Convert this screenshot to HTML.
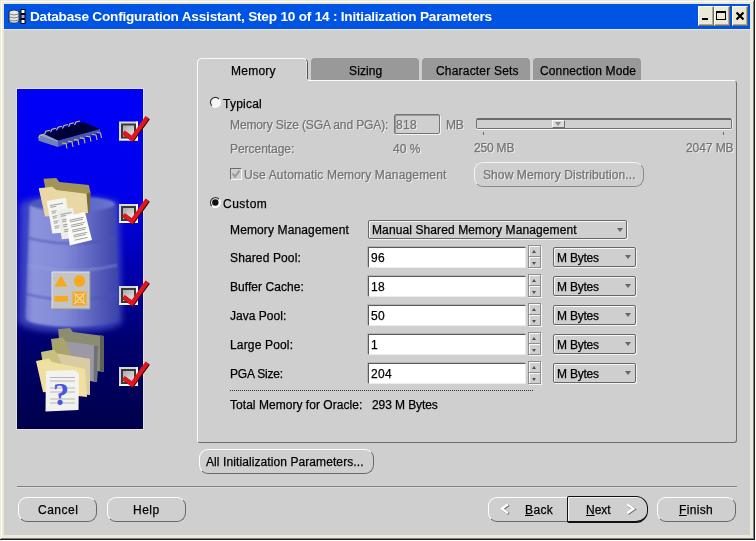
<!DOCTYPE html>
<html><head><meta charset="utf-8"><title>Database Configuration Assistant</title>
<style>
*{box-sizing:border-box;margin:0;padding:0}
html,body{width:756px;height:541px;overflow:hidden;background:#fff}
body{position:relative;font-family:"Liberation Sans",sans-serif;font-size:12px;color:#000}
.abs{position:absolute}
#title{left:4px;top:4px;width:746px;height:25px;background:#0054e3;color:#fff;font-weight:bold;font-size:13.6px;line-height:24px;white-space:nowrap;letter-spacing:-0.21px}
#title span{will-change:transform}
.cb{position:absolute;top:2px;width:16px;height:20px;background:#ece9d8;border:1px solid #fff;border-right-color:#716f64;border-bottom-color:#716f64;box-shadow:inset -1px -1px 0 #aca899}
#content{left:4px;top:30px;width:746px;height:505px;background:#cfcfcf}
.t{position:absolute;white-space:nowrap;line-height:14px;height:14px;will-change:transform;-webkit-text-stroke:0.25px currentColor}
.t u{text-decoration:underline;text-underline-offset:1px}
.dis{color:#747474;text-shadow:1px 1px 0 #f2f2f2}
.btn{position:absolute;height:25px;border:1px solid #6a6a6a;border-top-color:#fff;border-left-color:#fff;border-radius:9px;background:#cfcfcf;}
.tab{position:absolute;top:58px;height:22px;background:#999;border-radius:4px 4px 0 0}
.inp{position:absolute;left:368px;width:158px;height:21px;background:#fff;border:1px solid #5a5a5a;border-right-color:#ececec;border-bottom-color:#ececec;box-shadow:-1px -1px 0 #b4b4b4;border-radius:1px}
.combo{position:absolute;left:553px;width:83px;height:20px;border:1px solid #666;border-radius:2px;background:#cfcfcf;box-shadow:inset 1px 1px 0 #f8f8f8,1px 1px 0 #f4f4f4}
.arr{position:absolute;width:0;height:0;border-left:3.5px solid transparent;border-right:3.5px solid transparent;border-top:4px solid #666}
.spin{position:absolute;left:528px;width:13px;height:23px;border:1px solid #8e8e8e;box-shadow:inset 1px 1px 0 #fafafa,1px 1px 0 #f6f6f6;background:#cfcfcf}
.spin:before{content:"";position:absolute;left:0;top:10px;width:11px;height:1px;background:#8e8e8e;box-shadow:0 1px 0 #fafafa}
.spin i{position:absolute;left:3px;width:0;height:0;border-left:2.5px solid transparent;border-right:2.5px solid transparent}
.spin i.u{top:4px;border-bottom:3px solid #505050}
.spin i.d{top:16px;border-top:3px solid #505050}
</style></head><body>
<div class="abs" style="left:0;top:0;width:756px;height:541px;background:#fff"></div>
<div class="abs" style="left:0;top:0;width:755px;height:540px;background:#181818"></div>
<div class="abs" style="left:0;top:0;width:754px;height:539px;background:#ece9d8"></div>
<div class="abs" style="left:1px;top:1px;width:753px;height:538px;background:#808080"></div>
<div class="abs" style="left:1px;top:1px;width:752px;height:537px;background:#fff"></div>
<div class="abs" style="left:2px;top:2px;width:751px;height:536px;background:#ece9d8"></div>
<div id="title" class="abs"><span style="position:absolute;left:26px;top:1px">Database Configuration Assistant, Step 10 of 14 : Initialization Parameters</span>
<svg class="abs" style="left:4px;top:4px" width="20" height="18" viewBox="0 0 20 18">
<path d="M1,3.5 Q6,0.5 11,3.5 V13.5 Q6,16.5 1,13.5 Z" fill="#d8d8d0" stroke="#202020" stroke-width="1"/>
<path d="M3,3 V14.5 M5,2.5 V15 M7,2.5 V15 M9,3 V14.5" stroke="#f8f8f8" stroke-width="1"/>
<path d="M1.5,6 Q6,8 10.5,6 M1.5,9 Q6,11 10.5,9 M1.5,12 Q6,14 10.5,12" stroke="#606878" stroke-width="0.8" fill="none"/>
<rect x="12.5" y="1" width="5" height="15" fill="#000"/>
<rect x="13.5" y="2" width="3" height="3" fill="#fff"/><rect x="13.5" y="7" width="3" height="3" fill="#b8a8c8"/><rect x="13.5" y="12" width="3" height="3" fill="#fff"/>
</svg>
<div class="cb" style="left:694px"><i style="position:absolute;left:3px;top:11px;width:6px;height:2px;background:#000"></i></div>
<div class="cb" style="left:710px"><i style="position:absolute;left:1px;top:4px;width:10px;height:9px;border:1px solid #000;border-top-width:2px"></i></div>
<div class="cb" style="left:728px"><svg width="16" height="20" style="position:absolute;left:-1px;top:-1px"><path d="M4.5,6.5 l7,7 M11.5,6.5 l-7,7" stroke="#000" stroke-width="2.2"/></svg></div>
</div>
<div class="abs" style="left:4px;top:29px;width:746px;height:1px;background:#ece9d8"></div>
<div id="content" class="abs"></div>

<svg class="abs" style="left:0;top:0" width="756" height="541" viewBox="0 0 756 541">
<defs>
<linearGradient id="bg" x1="0" y1="0" x2="0" y2="1">
<stop offset="0" stop-color="#0000f8"/><stop offset="0.3" stop-color="#0000ec"/><stop offset="0.47" stop-color="#0000c0"/><stop offset="0.62" stop-color="#000094"/><stop offset="0.75" stop-color="#00006c"/><stop offset="1" stop-color="#00004c"/>
</linearGradient>
<linearGradient id="cyl" x1="0" y1="0" x2="1" y2="0">
<stop offset="0" stop-color="#7078cc"/><stop offset="0.08" stop-color="#8c94de"/><stop offset="0.4" stop-color="#828ad8"/><stop offset="0.62" stop-color="#6a72c8"/><stop offset="0.82" stop-color="#5058b8"/><stop offset="1" stop-color="#3c44a8"/>
</linearGradient>
<linearGradient id="cyltop" x1="0" y1="0" x2="1" y2="0">
<stop offset="0" stop-color="#4c56c0"/><stop offset="0.5" stop-color="#5660c4"/><stop offset="1" stop-color="#6c76d0"/>
</linearGradient>
<linearGradient id="cbg" x1="0" y1="0" x2="1" y2="1"><stop offset="0" stop-color="#a8a8a8"/><stop offset="1" stop-color="#e8e8e8"/></linearGradient>
<clipPath id="pc"><rect x="17" y="89" width="126" height="340"/></clipPath>
<filter id="bl2" x="-20%" y="-20%" width="140%" height="140%"><feGaussianBlur stdDeviation="3"/></filter>
<filter id="bl" x="-10%" y="-10%" width="120%" height="120%"><feGaussianBlur stdDeviation="0.8"/></filter>
<g id="chk">
<rect x="0" y="0" width="19" height="19" fill="#d8d8d8"/>
<rect x="0" y="17" width="19" height="2" fill="#f4f4f4"/><rect x="17" y="0" width="2" height="19" fill="#f4f4f4"/>
<rect x="2" y="2" width="15" height="15" fill="#383838"/>
<rect x="4" y="4" width="11" height="11" fill="url(#cbg)"/>
<path d="M4.3,10.8 L13,17.2 L28.3,-4.2" fill="none" stroke="#300000" stroke-width="4.3" stroke-linejoin="miter" transform="translate(0.8,0.6)"/>
<path d="M4.3,10.8 L13,17.2 L28.3,-4.2" fill="none" stroke="#e4141c" stroke-width="4.3" stroke-linejoin="miter"/>
</g>
</defs>
<rect x="16.5" y="88.5" width="127" height="341" fill="none" stroke="#e2e2da" stroke-width="1"/>
<g clip-path="url(#pc)">
<rect x="17" y="89" width="126" height="340" fill="url(#bg)"/>
<!-- cylinder glow -->
<g filter="url(#bl2)" opacity="0.85">
<path d="M20,204 A51,10 0 0 1 119,203 L122,321 A51,11 0 0 1 18,321 Z" fill="#4650c4"/>
</g>
<g filter="url(#bl)">
<path d="M29.5,205 L115,205 L118.5,318 A46.5,9 0 0 1 25.5,318 Z" fill="url(#cyl)"/>
<ellipse cx="72.3" cy="204" rx="42.8" ry="7.5" fill="url(#cyltop)"/>
<path d="M28.5,238 Q72,249 116,238" fill="none" stroke="#4a54b4" stroke-width="1.3"/>
<path d="M27.5,265 Q72,276 117,265" fill="none" stroke="#9aa2e4" stroke-width="1.2" opacity="0.8"/>
<path d="M26.5,294 Q72,306 118,294" fill="none" stroke="#4a54b4" stroke-width="1.3"/>
</g>
<!-- chip -->
<polygon points="39,135.5 58,140.6 58,147 38.5,140.8" fill="#7080b8"/>
<polygon points="58,140.6 99.8,128.9 100.4,132 58,147" fill="#4858a8"/>
<polygon points="43.2,133.7 82.9,121.7 99.8,128.9 58,140.6" fill="#000038"/>
<polygon points="39,135.5 43.2,133.7 58,140.6 58,141.8" fill="#98a0c8"/>
<g stroke="#c8c078" stroke-width="1.1" fill="none">
<g transform="translate(1.5,2.2)"><path d="M37,136 l1.5,-3 l4,-1"/><path d="M43,132 l1.5,-3 l4,-1"/><path d="M49,130 l1.5,-3 l4,-1"/><path d="M55,128 l1.5,-3 l4,-1"/><path d="M61,126.3 l1.5,-3 l4,-1"/><path d="M67,124.5 l1.5,-3 l4,-1"/><path d="M73,122.8 l1.5,-3 l4,-1"/>
</g>
<path d="M62,143 l4,0.5 l1,5"/><path d="M68,141.3 l4,0.5 l1,5"/><path d="M74,139.6 l4,0.5 l1,5"/><path d="M80,137.9 l4,0.5 l1,5"/><path d="M86,136.2 l4,0.5 l1,5"/><path d="M92,134.5 l4,0.5 l1,5"/><path d="M97,132.5 l3.5,0.5 l1,5"/>
</g>
<!-- folder with docs -->
<polygon points="43.5,178.7 56.2,178 59.4,182 88.8,185.1 90.4,192 89,212 50,214" fill="#a09458"/>
<polygon points="86.4,193.8 90.4,192 89.5,212 88,213" fill="#786c38"/>
<polygon points="38.7,188.3 52.3,186.7 56.2,189.9 86.4,193.8 88,213 45.1,216.5" fill="#ead8a4"/>
<polygon points="46.7,201 65.8,197.8 71.3,232 52.3,233.6" fill="#f4f4f0"/>
<polygon points="57,210.5 72.9,207.4 79.3,237.6 61.8,239.2" fill="#ecece8"/>
<polygon points="65.8,216.1 84.9,212.1 92,240 69.7,245.5" fill="#fafaf6"/>
<g stroke="#8a8a8a" stroke-width="0.8">
<path d="M50,205.5 l13,-2.2 M50.3,207.3 l6,-1 M51.5,211.5 l5,-0.8 M51.8,213.3 l4,-0.7 M52.5,216.5 l5,-0.8 M52.8,218.3 l4,-0.7 M53.5,221.5 l5,-0.8 M53.8,223.3 l4,-0.7 M54.5,226.5 l5,-0.8 M54.8,228.3 l4,-0.7"/>
<path d="M60.5,214.5 l11,-2 M60.8,216.3 l5,-0.9 M62,220 l4.5,-0.8 M62.3,221.8 l4,-0.7 M63,225 l4.5,-0.8 M63.3,226.8 l4,-0.7 M64,230 l4.5,-0.8 M64.3,231.8 l4,-0.7"/>
<path d="M69.5,220.3 l14,-3 M69.9,222 l13,-2.8 M70.8,225.3 l14,-3 M71.2,227 l12,-2.6 M72,230.3 l14,-3 M72.4,232 l13,-2.8 M73.3,235.3 l14,-3 M73.7,237 l12,-2.6 M74.6,240.2 l13,-2.8"/>
</g>
<!-- shapes tile -->
<rect x="52" y="272" width="38" height="37" fill="#c4c4c4"/>
<path d="M52,309 V272 H90" fill="none" stroke="#e4e4e4" stroke-width="1"/>
<path d="M52,309 H90 V272" fill="none" stroke="#909090" stroke-width="1"/>
<polygon points="54.5,286.5 61,275.5 67.5,286.5" fill="#f8a81c"/>
<ellipse cx="79.5" cy="281" rx="5.6" ry="6" fill="#f8a81c"/>
<rect x="54.5" y="296" width="13.5" height="5.5" fill="#f8a81c"/>
<rect x="72.5" y="291.5" width="14" height="14" fill="#f8a81c"/>
<path d="M74,293 l11,11 M85,293 l-11,11" stroke="#e8d8a8" stroke-width="1.4"/>
<rect x="75.5" y="294.5" width="8" height="8" fill="none" stroke="#e8d8a8" stroke-width="0.8"/>
<!-- folder stack -->
<polygon points="58,329 70,328 73,332 104,336 104,372 62,366" fill="#8c8c70"/>
<polygon points="100,335.5 104,336 104,372 100,371.5" fill="#60605c"/>
<polygon points="51,339 63,337.5 66,341.5 98,346 97,382 56,376" fill="#a8a46c"/>
<polygon points="66,341.5 98,346 97,382 80,379" fill="#9c98a8"/>
<polygon points="94,345.5 98,346 97,382 93.5,381.5" fill="#707078"/>
<polygon points="41,352 54,349.5 57,353.5 90,359 90,395 47,390" fill="#c8c080"/>
<polygon points="57,353.5 90,359 90,395 74,392" fill="#d8cca0"/>
<polygon points="36,361 49,358.5 52,362 85,369 87,397 43,392" fill="#f0e0a0"/>
<polygon points="46,371 75,370 79,374 78.5,410 45.5,411.5" fill="#f2f2ee"/>
<g stroke="#a8a8a8" stroke-width="0.8"><path d="M50,377.5 h25 M50,381 h25 M50,388 h25 M50,392 h25 M50,399 h25 M50,403 h25"/></g>
<text x="53" y="405" font-family="Liberation Serif,serif" font-weight="bold" font-size="32" fill="#4a54dc">?</text>
</g>
<use href="#chk" x="119" y="121.5"/>
<use href="#chk" x="119" y="204"/>
<use href="#chk" x="119" y="286"/>
<use href="#chk" x="119" y="367"/>
</svg>

<div class="abs" style="left:197px;top:80px;width:540px;height:363px;border:1px solid #6e6e6e;border-left-color:#fafafa;border-top-color:#fafafa;border-radius:0 4px 3px 3px;background:#cfcfcf"></div>
<div class="tab" style="left:311px;width:108px"></div>
<div class="tab" style="left:422px;width:108px"></div>
<div class="tab" style="left:533px;width:108px"></div>
<div class="abs" style="left:197px;top:58px;width:111px;height:22px;background:#cfcfcf;border:1px solid #fafafa;border-right-color:#555;border-bottom:none;border-radius:5px 5px 0 0"></div>
<div class="abs" style="left:198px;top:79px;width:110px;height:3px;background:#cfcfcf"></div>
<div class="abs" style="left:306px;top:61px;width:1px;height:17px;background:#e2e2e2"></div>

<svg class="abs" style="left:209px;top:96px" width="13" height="13"><circle cx="6.4" cy="6.4" r="4.9" fill="#f6f6f6" stroke="#fdfdfd" stroke-width="1.1"/><path d="M2.8,9.8 A4.9,4.9 0 0 1 10,3" fill="none" stroke="#3c3c3c" stroke-width="1.25"/></svg>
<svg class="abs" style="left:209px;top:196px" width="13" height="13"><circle cx="6.4" cy="6.6" r="4.9" fill="#f6f6f6" stroke="#fdfdfd" stroke-width="1.1"/><path d="M2.8,10 A4.9,4.9 0 0 1 10,3.2" fill="none" stroke="#3c3c3c" stroke-width="1.25"/><circle cx="6.3" cy="6.5" r="3.2" fill="#111"/></svg>

<div class="abs" style="left:394px;top:114px;width:46px;height:20px;border:1px solid #747474;box-shadow:inset 1px 1px 0 #9a9a9a,1px 1px 0 #f4f4f4;border-radius:2px;background:#cfcfcf"></div>
<div class="abs" style="left:476px;top:118px;width:256px;height:11px;border:1px solid #707070;border-top:2px solid #6a6a6a;border-radius:2px;background:#cfcfcf;box-shadow:0 1px 0 #f6f6f6,1px 0 0 #f0f0f0"></div>
<div class="abs" style="left:552px;top:120px;width:13px;height:8px;background:#dcdcdc;border:1px solid #f8f8f8;border-right-color:#707070;border-bottom-color:#707070"></div>
<div class="abs" style="left:555px;top:122px;width:0;height:0;border-left:3.5px solid transparent;border-right:3.5px solid transparent;border-top:4px solid #8a8a8a"></div>
<div class="abs" style="left:483px;top:132px;width:1px;height:3px;background:#6a6a6a"></div>
<div class="abs" style="left:723px;top:132px;width:1px;height:3px;background:#6a6a6a"></div>

<div class="abs" style="left:230px;top:168px;width:12px;height:12px;border:1px solid #6c6c6c;border-right-color:#f6f6f6;border-bottom-color:#f6f6f6;background:#cfcfcf"></div>
<svg class="abs" style="left:230px;top:168px" width="12" height="12"><path d="M2.6,5.6 L5,8.6 L9.6,2.6" fill="none" stroke="#9c9c9c" stroke-width="2.1"/></svg>

<div class="btn" style="left:474px;top:162px;width:170px;height:25px;border-color:#f4f4f4 #8a8a8a #8a8a8a #f4f4f4"></div>
<div class="combo" style="left:368px;top:220px;width:259px;height:19px"><i class="arr" style="right:3px;top:7px"></i></div>
<div class="inp" style="top:247px"></div><div class="spin" style="top:245px"><i class="u"></i><i class="d"></i></div><div class="combo" style="top:247px"><i class="arr" style="right:4px;top:7px"></i></div>
<div class="inp" style="top:276px"></div><div class="spin" style="top:274px"><i class="u"></i><i class="d"></i></div><div class="combo" style="top:276px"><i class="arr" style="right:4px;top:7px"></i></div>
<div class="inp" style="top:305px"></div><div class="spin" style="top:303px"><i class="u"></i><i class="d"></i></div><div class="combo" style="top:305px"><i class="arr" style="right:4px;top:7px"></i></div>
<div class="inp" style="top:334px"></div><div class="spin" style="top:332px"><i class="u"></i><i class="d"></i></div><div class="combo" style="top:334px"><i class="arr" style="right:4px;top:7px"></i></div>
<div class="inp" style="top:363px"></div><div class="spin" style="top:361px"><i class="u"></i><i class="d"></i></div><div class="combo" style="top:363px"><i class="arr" style="right:4px;top:7px"></i></div>
<div class="abs" style="left:230px;top:390px;width:303px;height:1px;background:repeating-linear-gradient(90deg,#333 0 1px,transparent 1px 2px)"></div>
<div class="btn" style="left:199px;top:449px;width:175px"></div>
<div class="abs" style="left:17px;top:486px;width:720px;height:1px;background:#808080"></div>
<div class="abs" style="left:17px;top:487px;width:720px;height:1px;background:#dcdcdc"></div>
<div class="btn" style="left:18px;top:497px;width:79px"></div>
<div class="btn" style="left:107px;top:497px;width:79px"></div>
<div class="btn" style="left:488px;top:497px;width:80px;border-radius:9px 0 0 9px"></div>
<div class="btn" style="left:657px;top:497px;width:79px"></div>
<div class="abs" style="left:567px;top:496px;width:81px;height:27px;border:1.5px solid #111;border-bottom-width:2px;border-radius:2px 12px 12px 2px;background:#cfcfcf;box-shadow:inset 1px 1px 0 #f4f4f4"></div>
<svg class="abs" style="left:496px;top:500px" width="18" height="18"><path d="M12,4.3 L5.8,8.7 L12,13.2" fill="none" stroke="#6e6e6e" stroke-width="2.9" transform="translate(0.8,0.6)"/><path d="M12,4.3 L5.8,8.7 L12,13.2" fill="none" stroke="#fdfdfd" stroke-width="2.4"/></svg>
<svg class="abs" style="left:621.5px;top:500px" width="18" height="18"><path d="M5.3,4.3 L11.5,8.7 L5.3,13.2" fill="none" stroke="#6e6e6e" stroke-width="2.9" transform="translate(0.7,0.6)"/><path d="M5.3,4.3 L11.5,8.7 L5.3,13.2" fill="none" stroke="#fdfdfd" stroke-width="2.4"/></svg>

<div class="t " id="t0" style="left:231.30px;top:64px;letter-spacing:0.241px;">Memory</div>
<div class="t " id="t1" style="left:348.80px;top:64px;letter-spacing:0.122px;">Sizing</div>
<div class="t " id="t2" style="left:435.55px;top:64px;letter-spacing:0.193px;">Character Sets</div>
<div class="t " id="t3" style="left:539.80px;top:64px;letter-spacing:0.142px;">Connection Mode</div>
<div class="t " id="t4" style="left:222.55px;top:97px;letter-spacing:0.240px;">Typical</div>
<div class="t dis" id="t5" style="left:229.80px;top:118px;letter-spacing:-0.120px;">Memory Size (SGA and PGA):</div>
<div class="t dis" id="t6" style="left:229.80px;top:142px;letter-spacing:-0.042px;">Percentage:</div>
<div class="t dis" id="t7" style="left:393.05px;top:142px;letter-spacing:0.064px;">40 %</div>
<div class="t dis" id="t8" style="left:445.55px;top:118px;letter-spacing:-0.250px;">MB</div>
<div class="t dis" id="t9" style="left:396.30px;top:118px;letter-spacing:0.330px;">818</div>
<div class="t dis" id="t10" style="left:473.80px;top:141px;letter-spacing:-0.192px;">250 MB</div>
<div class="t dis" id="t11" style="left:686.30px;top:141px;letter-spacing:-0.080px;">2047 MB</div>
<div class="t dis" id="t12" style="left:243.80px;top:168px;letter-spacing:0.163px;">Use Automatic Memory Management</div>
<div class="t dis" id="t13" style="left:483.05px;top:168px;letter-spacing:0.096px;">Show Memory Distribution...</div>
<div class="t " id="t14" style="left:223.05px;top:197px;letter-spacing:0.500px;">Custom</div>
<div class="t " id="t15" style="left:230.05px;top:223px;letter-spacing:0.130px;">Memory Management</div>
<div class="t " id="t16" style="left:230.05px;top:251px;letter-spacing:0.128px;">Shared Pool:</div>
<div class="t " id="t17" style="left:230.05px;top:280px;letter-spacing:0.054px;">Buffer Cache:</div>
<div class="t " id="t18" style="left:230.05px;top:309px;letter-spacing:0.028px;">Java Pool:</div>
<div class="t " id="t19" style="left:230.05px;top:338px;letter-spacing:0.166px;">Large Pool:</div>
<div class="t " id="t20" style="left:230.05px;top:367px;letter-spacing:-0.207px;">PGA Size:</div>
<div class="t " id="t21" style="left:229.80px;top:398px;letter-spacing:0.040px;">Total Memory for Oracle:</div>
<div class="t " id="t22" style="left:372.30px;top:398px;letter-spacing:-0.090px;">293 M Bytes</div>
<div class="t " id="t23" style="left:372.30px;top:223px;letter-spacing:0.104px;">Manual Shared Memory Management</div>
<div class="t " id="t24" style="left:556.80px;top:251px;letter-spacing:-0.216px;">M Bytes</div>
<div class="t " id="t25" style="left:556.80px;top:280px;letter-spacing:-0.216px;">M Bytes</div>
<div class="t " id="t26" style="left:556.80px;top:309px;letter-spacing:-0.216px;">M Bytes</div>
<div class="t " id="t27" style="left:556.80px;top:338px;letter-spacing:-0.216px;">M Bytes</div>
<div class="t " id="t28" style="left:556.80px;top:367px;letter-spacing:-0.216px;">M Bytes</div>
<div class="t " id="t29" style="left:370.80px;top:251px;letter-spacing:0.330px;">96</div>
<div class="t " id="t30" style="left:370.80px;top:280px;letter-spacing:0.330px;">18</div>
<div class="t " id="t31" style="left:370.80px;top:309px;letter-spacing:0.330px;">50</div>
<div class="t " id="t32" style="left:370.80px;top:338px;letter-spacing:0.000px;">1</div>
<div class="t " id="t33" style="left:370.80px;top:367px;letter-spacing:0.330px;">204</div>
<div class="t " id="t34" style="left:206.30px;top:455px;letter-spacing:0.089px;">All Initialization Parameters...</div>
<div class="t " id="t35" style="left:37.55px;top:503px;letter-spacing:0.488px;">Cancel</div>
<div class="t " id="t36" style="left:132.55px;top:503px;letter-spacing:0.500px;">Help</div>
<div class="t " id="t37" style="left:524.80px;top:503px;letter-spacing:0.366px;"><u>B</u>ack</div>
<div class="t " id="t38" style="left:586.05px;top:503px;letter-spacing:-0.046px;"><u>N</u>ext</div>
<div class="t " id="t39" style="left:678.90px;top:503px;letter-spacing:0.354px;"><u>F</u>inish</div>
</body></html>
